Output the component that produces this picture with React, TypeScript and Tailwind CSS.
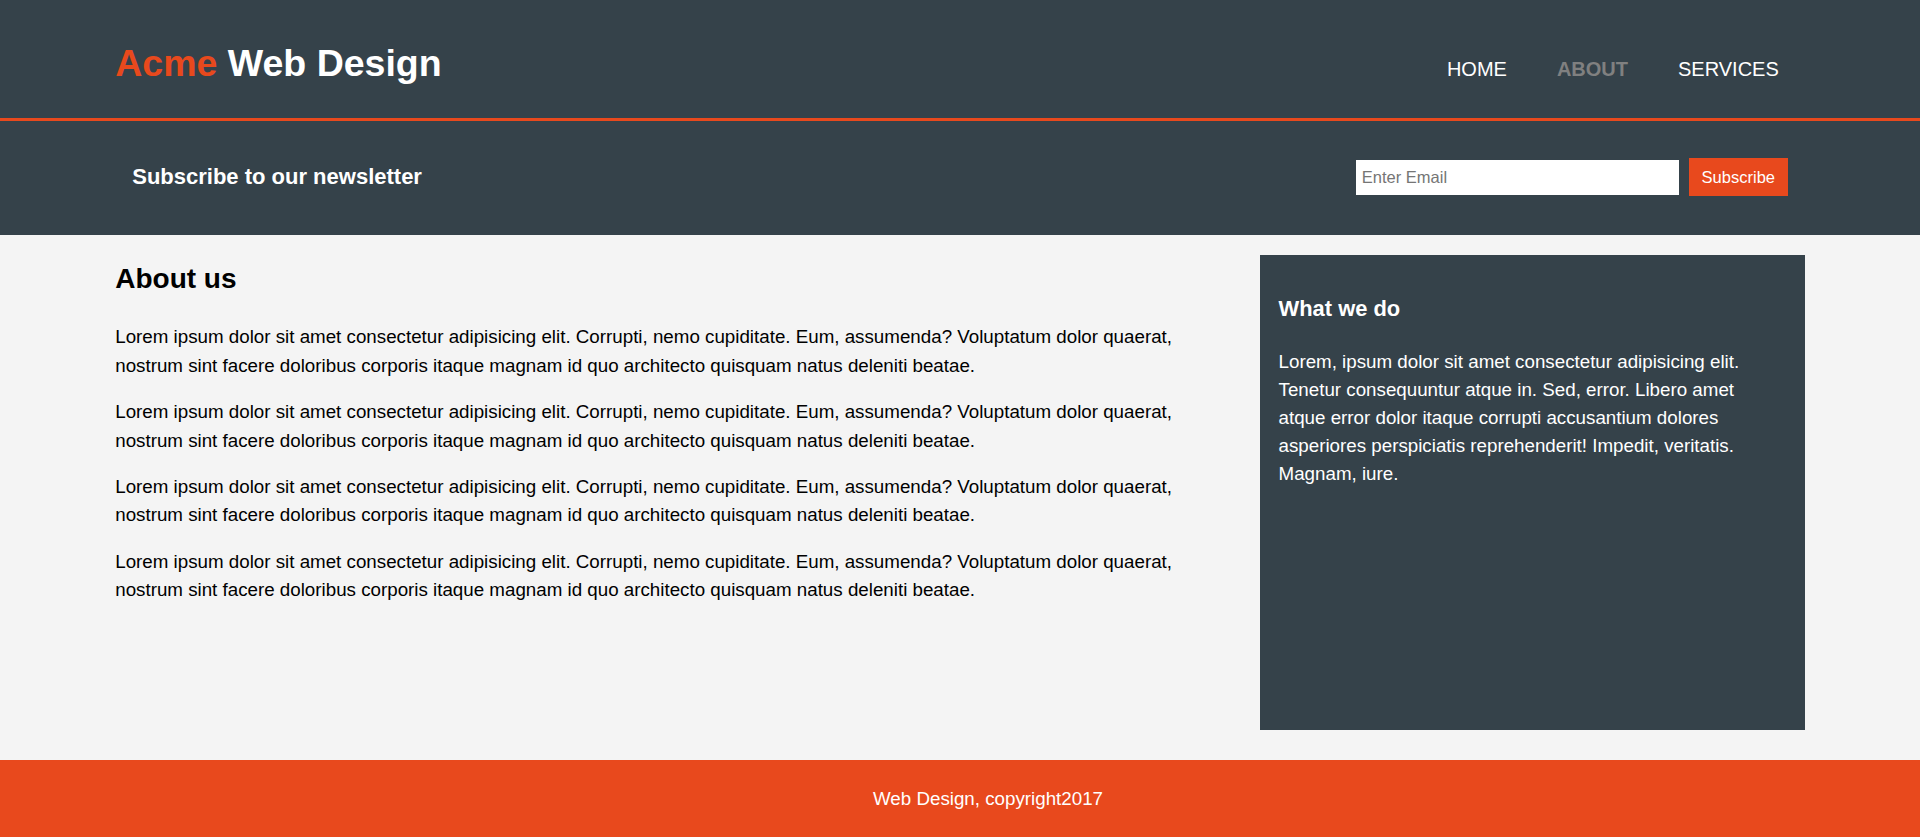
import { useState } from 'react';

const lorem =
    'Lorem ipsum dolor sit amet consectetur adipisicing elit. Corrupti, nemo cupiditate. Eum, assumenda? Voluptatum dolor quaerat, nostrum sint facere doloribus corporis itaque magnam id quo architecto quisquam natus deleniti beatae.';

export default function App() {
    const [email, setEmail] = useState('');

    return (
        <div className="min-h-screen bg-[#f4f4f4] font-['Liberation_Sans',Arial,sans-serif] text-[18.75px] leading-[28.1px] text-black">
            {/* Header */}
            <header className="bg-[#35424a] border-b-[3px] border-[#e8491d] text-white">
                <div className="w-[88%] mx-auto h-[118px] flex justify-between items-start">
                    <h1 className="mt-[45px] text-[37.5px] leading-none font-bold">
                        <span className="text-[#e8491d]">Acme</span> Web Design
                    </h1>
                    <nav className="mt-[59px]">
                        <ul className="flex text-[20px] leading-none uppercase">
                            <li className="px-[25px]"><a href="#">Home</a></li>
                            <li className="px-[25px] font-bold text-[#808080]"><a href="#">About</a></li>
                            <li className="px-[25px] pr-[26px]"><a href="#">Services</a></li>
                        </ul>
                    </nav>
                </div>
            </header>

            {/* Newsletter */}
            <section className="bg-[#35424a] text-white">
                <div className="w-[88%] mx-auto h-[114px] px-[17px] flex justify-between items-center">
                    <h1 className="text-[22px] leading-none font-bold mb-[3px]">Subscribe to our newsletter</h1>
                    <form className="flex items-center gap-[10px] mb-[2px]" onSubmit={(e) => e.preventDefault()}>
                        <input
                            type="email"
                            value={email}
                            onChange={(e) => setEmail(e.target.value)}
                            placeholder="Enter Email"
                            className="w-[323px] h-[35px] px-[6px] bg-white text-black text-[16.5px] outline-none placeholder:text-[#757575]"
                        />
                        <button type="submit" className="w-[99px] h-[38px] bg-[#e8491d] text-white text-[16.5px] leading-none">
                            Subscribe
                        </button>
                    </form>
                </div>
            </section>

            {/* Main */}
            <section className="w-[88%] mx-auto flex justify-between items-start">
                <article className="w-[1098px] pt-[29.6px]">
                    <h1 className="text-[28px] leading-none font-bold mb-[30.9px]">About us</h1>
                    {[0, 1, 2, 3].map((i) => (
                        <p key={i} className="mb-[18.75px]">{lorem}</p>
                    ))}
                </article>
                <aside className="w-[545px] h-[475px] mt-[19.5px] mb-[30.5px] bg-[#35424a] text-white px-[18.75px] pt-[43.3px]">
                    <h3 className="text-[21.9px] leading-none font-bold mb-[27.8px]">What we do</h3>
                    <p>
                        Lorem, ipsum dolor sit amet consectetur adipisicing elit. Tenetur consequuntur atque in. Sed, error.
                        Libero amet atque error dolor itaque corrupti accusantium dolores asperiores perspiciatis
                        reprehenderit! Impedit, veritatis. Magnam, iure.
                    </p>
                </aside>
            </section>

            {/* Footer */}
            <footer className="bg-[#e8491d] text-white text-center pt-[25px] pb-[25px] pl-[56px]">
                <p>Web Design, copyright2017</p>
            </footer>
        </div>
    );
}
